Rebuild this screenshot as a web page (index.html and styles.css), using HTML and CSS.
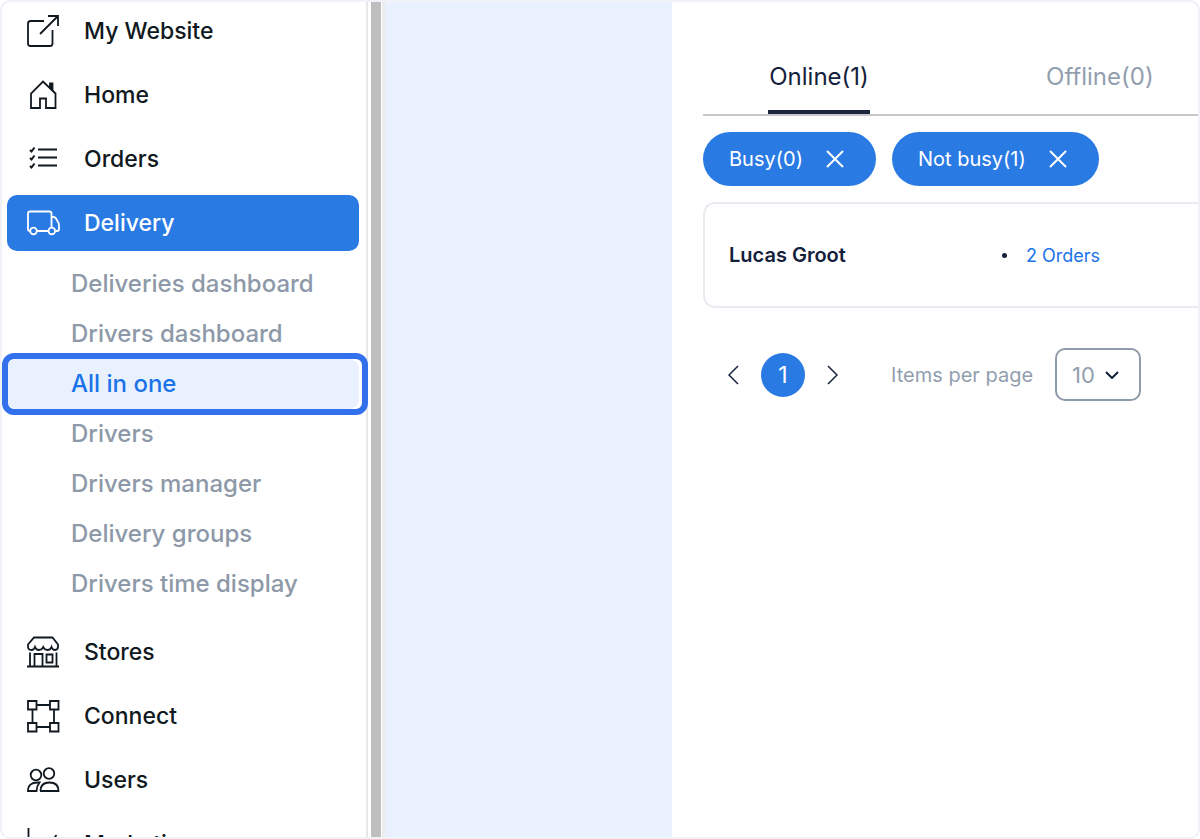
FILE: index.html
```html
<!DOCTYPE html>
<html lang="en">
<head>
    <meta charset="UTF-8">
    <meta name="viewport" content="width=device-width, initial-scale=1.0">
    <title>Delivery - All in one</title>
    <link rel="stylesheet" href="styles.css">
</head>
<body>
    <div class="app">
        <nav class="sidebar">
            <a href="#" class="nav-item">
                <svg class="icon" viewBox="0 0 32 32"><path d="M17 6H3.500Q1 6 1 8.500V28.500Q1 31 3.500 31H23Q25.500 31 25.500 28.500V15"/><path d="M13 19 31 1M21 1H31V11"/></svg>
                My Website
            </a>
            <a href="#" class="nav-item">
                <svg class="icon" viewBox="0 0 32 32"><path d="M4 29V14.500L16 2.500 28.500 14.500V29H19V19.500H13V29Z"/><path class="fill" d="M23 4.500H25.500V11L23 8.500Z"/></svg>
                Home
            </a>
            <a href="#" class="nav-item">
                <svg class="icon" viewBox="0 0 32 32"><path d="M11 6.500H30M11 14.500H30M11 22.500H30"/><path class="thick" d="M3 7 4.500 8.500 7.500 4.500M3 15 4.500 16.500 7.500 12.500M3 23 4.500 24.500 7.500 20.500"/></svg>
                Orders
            </a>
            <a href="#" class="nav-item active">
                <svg class="icon" viewBox="0 0 32 32"><path d="M3 24Q1 24 1 22V6.500Q1 4.500 3 4.500H22.500Q24.500 4.500 24.500 6.500V21M10 24H21M24.500 10H26.500Q28 10 29 11.500L31 15Q32 16.500 32 18V22Q32 24 30 24H29"/><circle cx="6.500" cy="24" r="3.300"/><circle cx="24.800" cy="24" r="3.300"/></svg>
                Delivery
            </a>
            <div class="submenu">
                <a href="#">Deliveries dashboard</a>
                <a href="#">Drivers dashboard</a>
                <a href="#" class="selected">All in one</a>
                <a href="#">Drivers</a>
                <a href="#">Drivers manager</a>
                <a href="#">Delivery groups</a>
                <a href="#">Drivers time display</a>
            </div>
            <a href="#" class="nav-item">
                <svg class="icon" viewBox="0 0 32 32"><path d="M7 1.500H25.500L31 8.500V10.500Q31 14 28 14 25.500 14 24.500 11 23.500 14 20.500 14 17.500 14 16.200 11 15 14 12 14 9 14 8 11 7 14 4.500 14 1 14 1 10.500V8.500Z"/><path d="M0 30.500H32M3 16.500V30M29.500 16.500V30M7.500 30V18H15.500V30M19.500 18.500H25.500V26.500H19.500Z"/></svg>
                Stores
            </a>
            <a href="#" class="nav-item">
                <svg class="icon" viewBox="0 0 32 32"><path d="M1 1H9.500V9.500H1ZM23 1H31.500V9.500H23ZM1 23H9.500V31.500H1ZM23 23H31.500V31.500H23ZM9.500 5H23M9.500 27H23M5.500 9.500V23M27 9.500V23"/></svg>
                Connect
            </a>
            <a href="#" class="nav-item">
                <svg class="icon" viewBox="0 0 32 32"><circle cx="9" cy="11" r="5.300"/><circle cx="22" cy="9.500" r="5.300"/><path d="M13 27H13.500Q13.500 18.500 22.500 18.500 31.500 18.500 31.500 27ZM12.500 18.500H10.500Q1 18.500 1 27H9.500Q9.500 22.500 12.500 18.500Z"/></svg>
                Users
            </a>
            <a href="#" class="nav-item">
                <svg class="icon" viewBox="0 0 32 32"><path d="M1.500 0V31H32"/><path d="M7 25 14 16 20 20 29.500 7"/></svg>
                Marketing
            </a>
        </nav>
        <div class="scroll-track"><div class="scroll-thumb"></div></div>
        <div class="map"></div>
        <main class="panel">
            <div class="tabs">
                <button type="button" class="tab current">Online(1)</button>
                <button type="button" class="tab">Offline(0)</button>
            </div>
            <div class="chips">
                <button type="button" class="chip">Busy(0)
                    <svg class="close" viewBox="0 0 20 20"><path d="M2 2 18 18M18 2 2 18"/></svg>
                </button>
                <button type="button" class="chip">Not busy(1)
                    <svg class="close" viewBox="0 0 20 20"><path d="M2 2 18 18M18 2 2 18"/></svg>
                </button>
            </div>
            <div class="driver">
                <span class="driver-name">Lucas Groot</span>
                <span class="dot"></span>
                <a href="#" class="driver-orders">2 Orders</a>
            </div>
            <div class="pagination">
                <button type="button" class="arrow" aria-label="Previous page">
                    <svg viewBox="0 0 12 20"><path d="M10 1 1 10 10 19"/></svg>
                </button>
                <button type="button" class="page">1</button>
                <button type="button" class="arrow" aria-label="Next page">
                    <svg viewBox="0 0 12 20"><path d="M2 1 11 10 2 19"/></svg>
                </button>
                <label class="per-page" for="per-page">Items per page</label>
                <div class="select">
                    <select id="per-page">
                        <option>10</option>
                        <option>20</option>
                        <option>50</option>
                    </select>
                    <svg viewBox="0 0 14 8"><path d="M1 1 7 7 13 1"/></svg>
                </div>
            </div>
        </main>
    </div>
</body>
</html>
```
FILE: styles.css
```css
* {
    box-sizing: border-box;
}

body {
    margin: 0;
    background-color: #fff;
    font-family: Inter, "Noto Sans", sans-serif;
    font-size: 23px;
    color: #101820;
}

a {
    color: inherit;
    text-decoration: none;
}

button, select {
    margin: 0;
    padding: 0;
    border: none;
    background: none;
    font: inherit;
    color: inherit;
    cursor: pointer;
}

svg {
    fill: none;
    stroke: currentColor;
    stroke-width: 2;
}

.app {
    display: flex;
    height: 100vh;
    border: 2px solid #f1f1f8;
    border-radius: 10px;
    overflow: hidden;
}

/* Sidebar */
.sidebar {
    display: flex;
    flex-direction: column;
    flex: none;
    gap: 8px;
    width: 366px;
    padding: 1px 7px 0 5px;
    border-right: 2px solid #e8e8e8;
}

.nav-item {
    display: flex;
    flex: none;
    align-items: center;
    gap: 25px;
    height: 56px;
    padding-left: 20px;
    border-radius: 10px;
    font-weight: 500;
}

.nav-item.active {
    background-color: #2a7ae4;
    color: #fff;
}

.icon {
    width: 32px;
    height: 32px;
    overflow: visible;
    stroke-width: 1.8;
}

.icon .fill {
    fill: currentColor;
}

.icon .thick {
    stroke-width: 2;
}

.submenu {
    flex: none;
    padding-bottom: 7px;
    color: #8d99a8;
    font-size: 24px;
    font-weight: 500;
}

.submenu a {
    display: block;
    height: 50px;
    padding-left: 64px;
    line-height: 49px;
}

.submenu .selected {
    position: relative;
    border-radius: 10px;
    background-color: #e9f1ff;
    color: #1a73e8;
}

/* focus ring around the selected entry */
.submenu .selected::after {
    content: "";
    position: absolute;
    inset: -6px -9px -6px -5px;
    border: 6px solid #3370ec;
    border-radius: 12px;
}

.scroll-track {
    flex: none;
    width: 17px;
    padding: 0 1px 0 3px;
    border-right: 3px solid #ececec;
}

.scroll-thumb {
    height: 100%;
    background-color: #bfbfbf;
}

.map {
    flex: none;
    width: 24%;
    background-color: #e9f1ff;
}

/* Drivers panel */
.panel {
    flex: 1;
    min-width: 0;
    padding: 42px 0 0 31px;
    overflow: hidden;
    color: #14213a;
}

.tabs {
    display: flex;
    gap: 176px;
    height: 72px;
    padding-left: 65px;
    border-bottom: 2px solid #c8c8c8;
}

.tab {
    flex: none;
    min-width: 102px;
    padding-bottom: 2px;
    border-bottom: 4px solid transparent;
    color: #929eae;
    font-size: 24px;
}

.tab.current {
    border-color: #1c263c;
    color: #14213a;
}

.chips {
    display: flex;
    gap: 16px;
    margin: 16px 0;
}

.chip {
    display: flex;
    flex: none;
    align-items: center;
    gap: 22px;
    height: 54px;
    padding: 0 31px 0 26px;
    border-radius: 27px;
    background-color: #2a7ae4;
    color: #fff;
    font-size: 20px;
}

.close {
    width: 20px;
    height: 20px;
}

.driver {
    display: flex;
    align-items: center;
    height: 106px;
    padding-left: 24px;
    border: 2px solid #e8ecf1;
    border-right: none;
    border-radius: 12px 0 0 12px;
    font-size: 20px;
}

.driver-name {
    width: 273px;
    font-weight: 600;
}

.dot {
    width: 5px;
    height: 5px;
    margin-right: 19px;
    border-radius: 50%;
    background-color: #14213a;
}

.driver-orders {
    color: #1a73e8;
    font-size: 18px;
}

.pagination {
    display: flex;
    align-items: center;
    margin-top: 40px;
    padding-left: 25px;
}

.arrow svg {
    display: block;
    width: 12px;
    height: 20px;
    stroke-width: 1.5;
}

.page {
    width: 44px;
    height: 44px;
    margin: 0 21px;
    border-radius: 50%;
    background-color: #2a7ae4;
    color: #fff;
}

.per-page {
    width: 164px;
    margin-left: 53px;
    color: #929eae;
    font-size: 20px;
    white-space: nowrap;
}

.select {
    position: relative;
    flex: none;
}

.select select {
    width: 86px;
    height: 53px;
    padding-left: 15px;
    border: 2px solid #909baa;
    border-radius: 10px;
    color: #929eae;
    font-size: 22px;
    appearance: none;
}

.select svg {
    position: absolute;
    top: 23px;
    right: 22px;
    width: 14px;
    height: 8px;
    pointer-events: none;
}
```
